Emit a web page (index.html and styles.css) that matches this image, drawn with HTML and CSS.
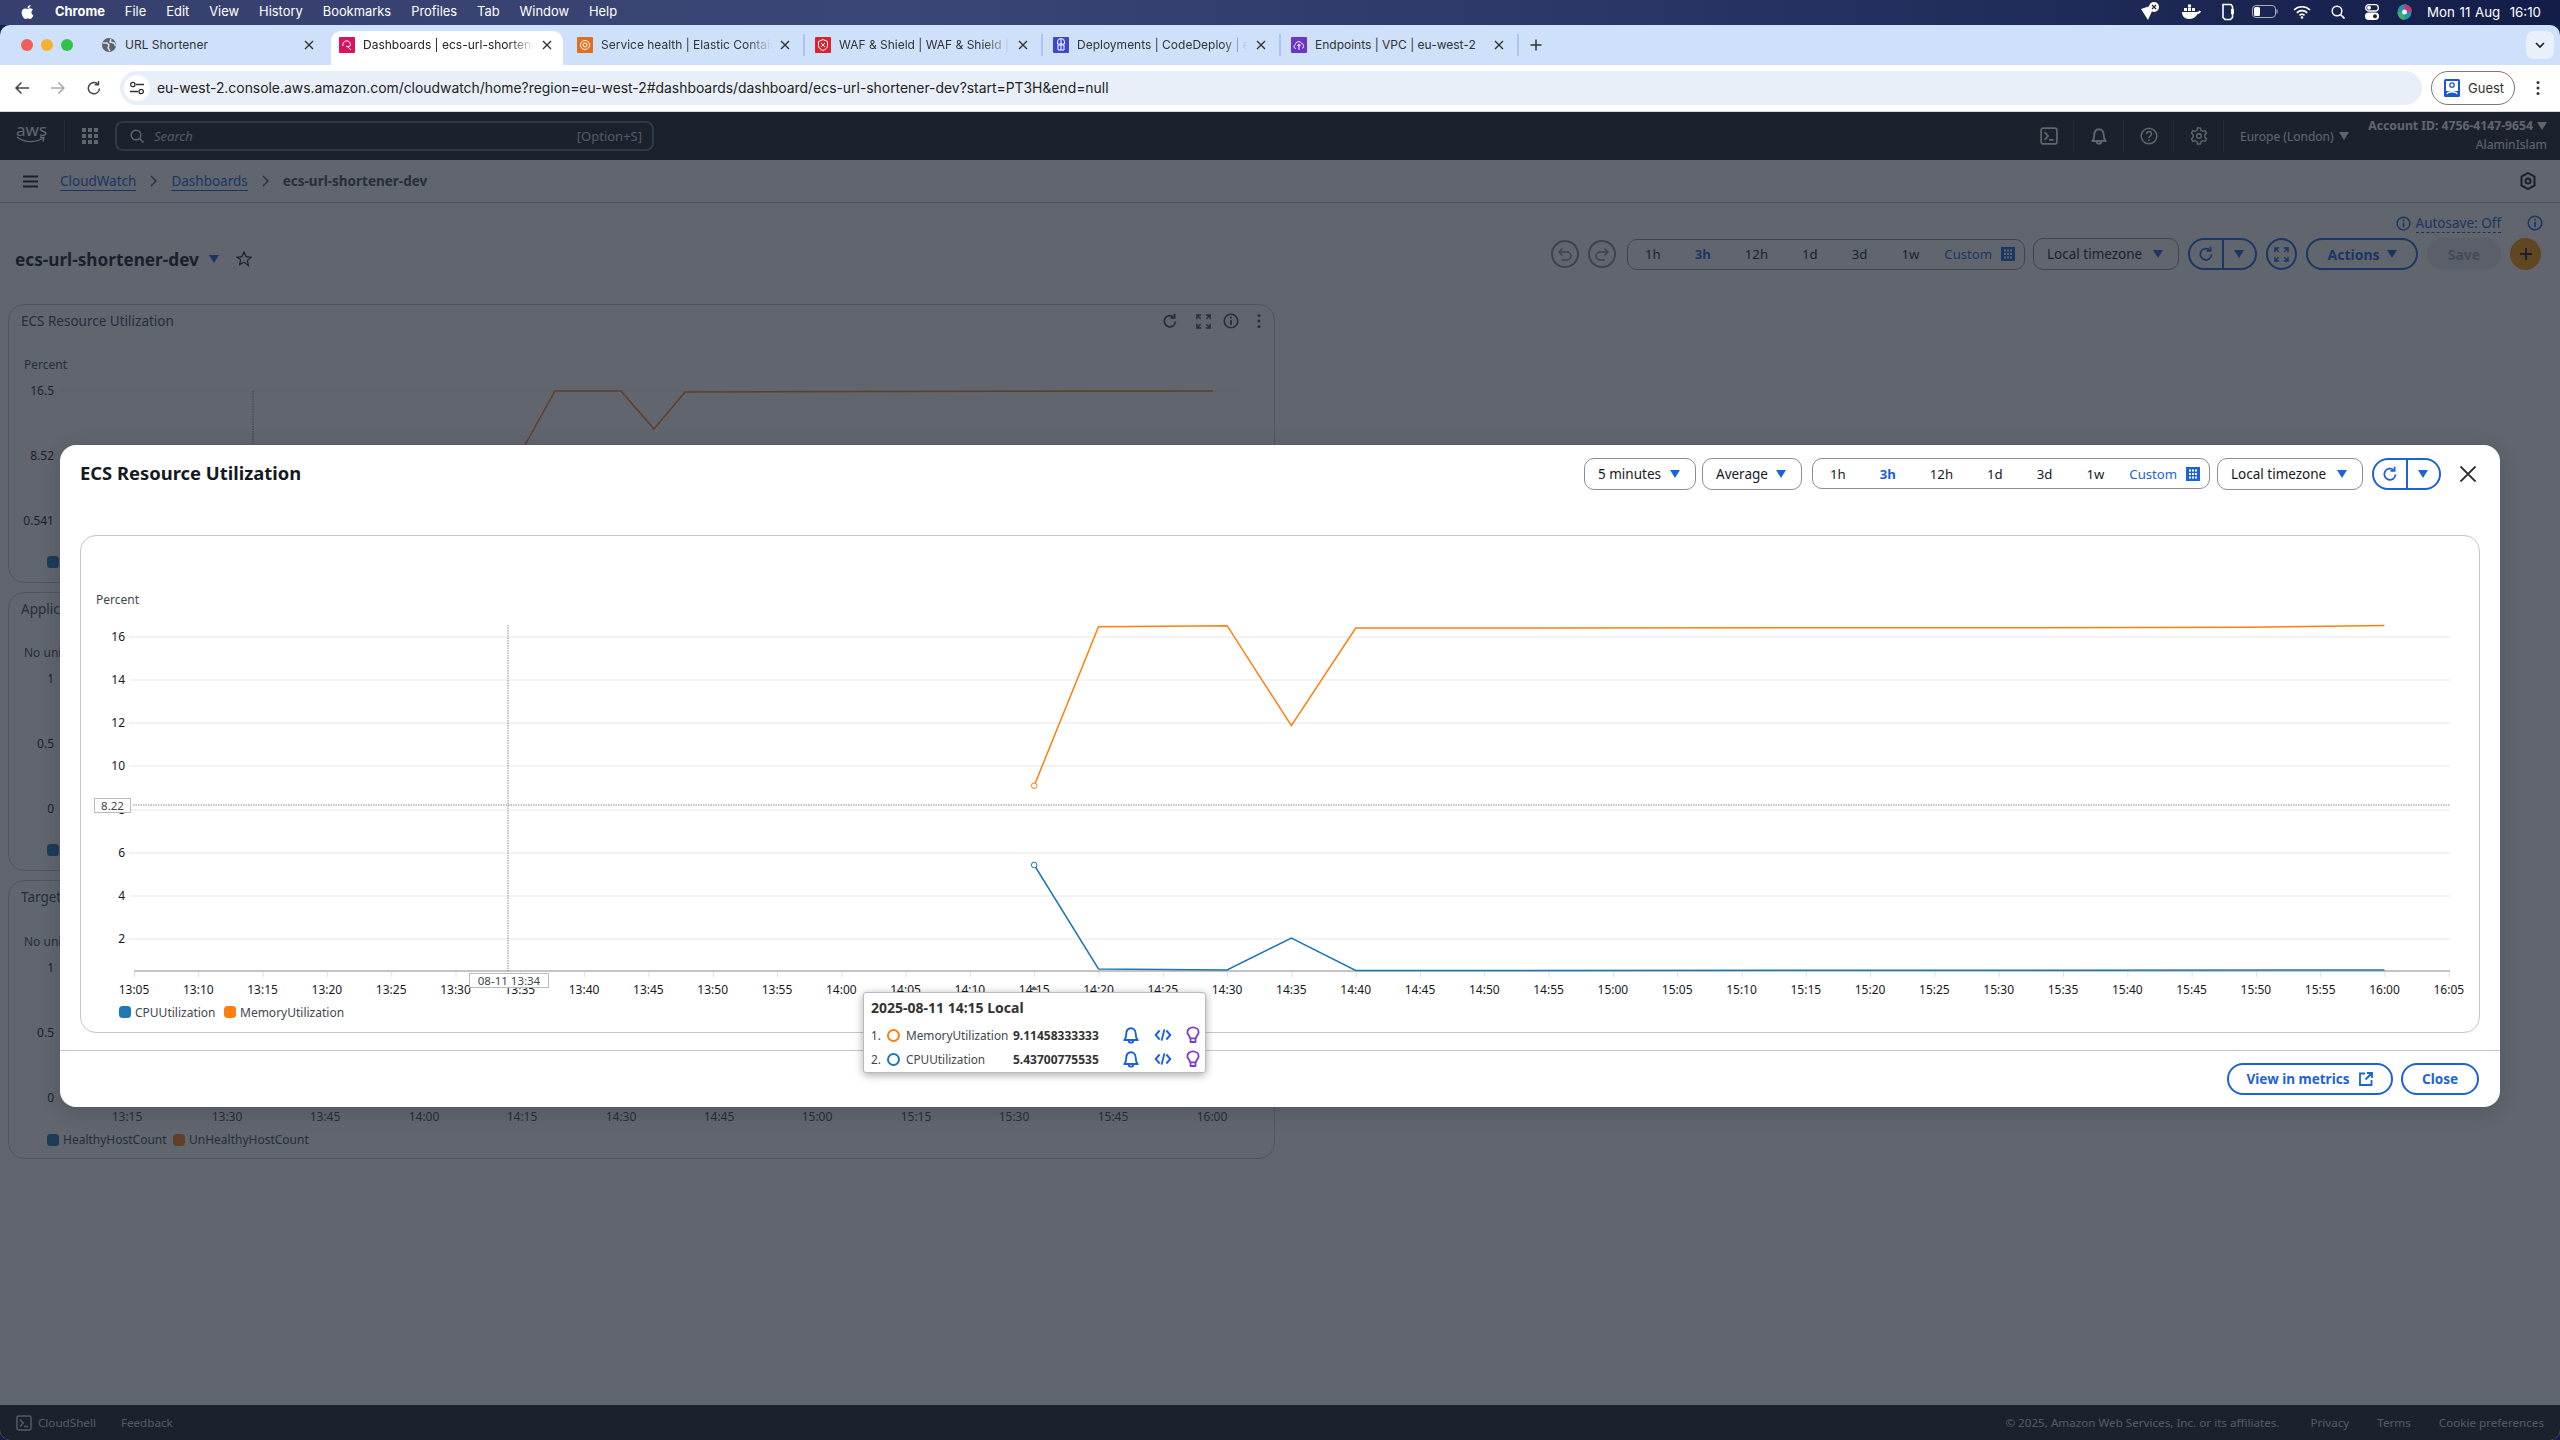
FILE: index.html
```html
<!DOCTYPE html>
<html lang="en">
<head>
  <meta charset="UTF-8" />
  <title>Dashboards | ecs-url-shortener-dev - CloudWatch</title>
  <link rel="stylesheet" href="styles.css">
</head>
<body>
  <svg class="sprite" xmlns="http://www.w3.org/2000/svg">
    <symbol id="i-close" viewBox="0 0 10 10"><path d="M1 1l8 8M9 1l-8 8" fill="none" stroke="currentColor" stroke-width="1.4"/></symbol>
    <symbol id="i-refresh" viewBox="0 0 16 16"><path d="M13.5 8.5a5.6 5.6 0 1 1-2-4.6" fill="none" stroke="currentColor" stroke-width="1.8"/><path d="M12.6 .8v4.1H8.5" fill="none" stroke="currentColor" stroke-width="1.8"/></symbol>
    <symbol id="i-cal" viewBox="0 0 14 14"><path d="M0 0h14v14H0z" fill="currentColor"/><path d="M3 2.5h2v2H3zM6 2.5h2v2H6zM9 2.5h2v2H9zM3 6h2v2H3zM6 6h2v2H6zM9 6h2v2H9zM3 9.500h2v2H3zM6 9.500h2v2H6zM9 9.500h2v2H9z" fill="#fff"/></symbol>
    <symbol id="i-bell" viewBox="0 0 16 16"><path d="M2 12.500c1.500-1.500 1.800-2.500 1.800-5.500C3.800 4 5.500 2 8 2s4.200 2 4.200 5c0 3 .3 4 1.800 5.500z M6 13c0 2.400 4 2.400 4 0" fill="none" stroke="currentColor" stroke-width="1.700" stroke-linejoin="round"/></symbol>
    <symbol id="i-code" viewBox="0 0 16 16"><path d="M5 4L1.500 8 5 12M11 4l3.500 4-3.500 4M9.300 3L6.700 13" fill="none" stroke="currentColor" stroke-width="1.700"/></symbol>
    <symbol id="i-bulb" viewBox="0 0 16 16"><path d="M5.500 11c0-2-2.500-3-2.500-5.500C3 3 5.200 1.300 8 1.300S13 3 13 5.500C13 8 10.500 9 10.500 11z M5.800 11v3.200h4.400V11" fill="none" stroke="currentColor" stroke-width="1.600" stroke-linejoin="round"/></symbol>
    <symbol id="i-expand" viewBox="0 0 16 16"><path d="M1 5.500V1h4.500M10.500 1H15v4.500M15 10.500V15h-4.500M5.500 15H1v-4.500M1 1l4 4M15 1l-4 4M15 15l-4-4M1 15l4-4" fill="none" stroke="currentColor" stroke-width="1.600"/></symbol>
    <symbol id="i-info" viewBox="0 0 16 16"><circle cx="8" cy="8" r="6.800" fill="none" stroke="currentColor" stroke-width="1.600"/><path d="M8 7v5M8 3.800v1.800" fill="none" stroke="currentColor" stroke-width="1.800"/></symbol>
    <symbol id="i-shell" viewBox="0 0 16 16"><rect x="1" y="1" width="14" height="14" rx="2" fill="none" stroke="currentColor" stroke-width="1.500"/><path d="M4 4.500L7.200 8 4 11.500M8 11.500h4" fill="none" stroke="currentColor" stroke-width="1.500"/></symbol>
  </svg>

  <div class="menubar">
    <svg class="apple" viewBox="0 0 384 512"><path d="M318.700 268.700c-.2-36.700 16.400-64.400 50-84.800-18.800-26.900-47.200-41.700-84.700-44.600-35.500-2.800-74.300 20.700-88.500 20.700-15 0-49.400-19.700-76.400-19.700C63.300 141.200 4 184.800 4 273.500q0 39.300 14.400 81.200c12.800 36.700 59 126.700 107.200 125.200 25.200-.6 43-17.900 75.800-17.900 31.800 0 48.300 17.900 76.400 17.900 48.600-.7 90.400-82.500 102.600-119.300-65.200-30.700-61.700-90-61.700-91.900zm-56.600-164.200c27.300-32.400 24.800-61.900 24-72.500-24.100 1.400-52 16.400-67.900 34.900-17.500 19.800-27.800 44.300-25.600 71.900 26.100 2 49.900-11.400 69.500-34.300z"/></svg>
    <b>Chrome</b><span>File</span><span>Edit</span><span>View</span><span>History</span><span>Bookmarks</span><span>Profiles</span><span>Tab</span><span>Window</span><span>Help</span>
    <div class="status-icons">
      <svg width="22" height="22" viewBox="0 0 22 22"><path d="M2 8l9-3 3 3-5 11z" fill="#fff"/><circle cx="15" cy="6" r="5" fill="#fff"/><path d="M13 4l4 4M17 4l-4 4" stroke="#222" stroke-width="1.200"/></svg>
      <svg width="20" height="16" viewBox="0 0 20 16"><path d="M1 8h15c1 0 2-1 2.500-1.500L20 7.500c-1 2-2.500 2.500-3.500 2.500C15 13 12 15 8 15 3.500 15 1 12 1 8z" fill="#fff"/><path d="M3 4h3v3H3zM7 4h3v3H7zM11 4h3v3h-3zM7 .5h3v3H7z" fill="#fff"/></svg>
      <svg width="14" height="18" viewBox="0 0 14 18"><path d="M2 1.500h8l1.500 2v11l-2 2H4l-2-2z" fill="none" stroke="#fff" stroke-width="1.600"/><path d="M10 6h3v5h-3z" fill="#fff"/></svg>
      <svg width="26" height="13" viewBox="0 0 26 13"><rect x=".5" y=".5" width="23" height="12" rx="3.500" fill="none" stroke="#aab" stroke-width="1"/><rect x="2" y="2" width="6" height="9" rx="1.500" fill="#fff"/><path d="M25 4.500v4" stroke="#aab" stroke-width="1.200"/></svg>
      <svg width="18" height="14" viewBox="0 0 18 14"><path d="M1 5a11.500 11.500 0 0 1 16 0M3.800 7.800a7.500 7.500 0 0 1 10.400 0M6.500 10.300a3.500 3.500 0 0 1 5 0" fill="none" stroke="#fff" stroke-width="1.700"/><circle cx="9" cy="12.500" r="1.300" fill="#fff"/></svg>
      <svg width="14" height="14" viewBox="0 0 14 14"><circle cx="6" cy="6" r="4.800" fill="none" stroke="#fff" stroke-width="1.500"/><path d="M9.500 9.500L13.500 13.500" stroke="#fff" stroke-width="1.700"/></svg>
      <svg width="14" height="16" viewBox="0 0 14 16"><rect x=".7" y=".7" width="12.600" height="6.300" rx="3" fill="none" stroke="#fff" stroke-width="1.300"/><circle cx="4" cy="3.800" r="2" fill="#fff"/><rect y="8.500" width="14" height="7.500" rx="3.700" fill="#fff"/><circle cx="10" cy="12.200" r="2" fill="#222"/></svg>
      <svg width="15" height="16" viewBox="0 0 15 16"><ellipse cx="7.500" cy="8" rx="7" ry="7.800" fill="#2a8fa8"/><path d="M7.500 .2C12 .2 15 4 15 8H7.500z" fill="#c0387a"/><path d="M.5 8c0 4 3 7.800 7 7.800V8z" fill="#3fae72"/><circle cx="7.500" cy="8" r="2.500" fill="#e7eefc"/></svg>
    </div>
    <span class="clock">Mon 11 Aug&nbsp; 16:10</span>
  </div>

  <div class="window">
    <div class="tabstrip">
      <div class="lights"><i class="red"></i><i class="amber"></i><i class="green"></i></div>
      <div class="tab">
        <svg class="favicon" viewBox="0 0 16 16"><circle cx="8" cy="8" r="7" fill="#5f6368"/><path d="M2 6h4l2 2-1 3 2 3M10 2L9 5l4 1 1.500 3" fill="none" stroke="#cfe0fa" stroke-width="1.500"/></svg>
        <span class="tab-title">URL Shortener</span>
        <svg class="tab-close"><use href="#i-close"/></svg>
      </div>
      <i class="tab-gap"></i>
      <div class="tab active">
        <svg class="favicon" viewBox="0 0 16 16"><rect width="16" height="16" rx="1" fill="#d6145f"/><path d="M4 9c-1-3 2-6 5-5 2 1 3 3 2 5-1 1-3 1-4 0M9 10l3 3" fill="none" stroke="#fff" stroke-width="1"/></svg>
        <span class="tab-title fade">Dashboards | ecs-url-shortener-dev - CloudWatch</span>
        <svg class="tab-close"><use href="#i-close"/></svg>
      </div>
      <i class="tab-gap"></i>
      <div class="tab">
        <svg class="favicon" viewBox="0 0 16 16"><rect width="16" height="16" rx="1" fill="#e0701e"/><circle cx="8" cy="8" r="4.500" fill="none" stroke="#fff" stroke-width="1"/><circle cx="8" cy="8" r="2" fill="none" stroke="#fff" stroke-width="1"/></svg>
        <span class="tab-title fade">Service health | Elastic Container Service</span>
        <svg class="tab-close"><use href="#i-close"/></svg>
      </div>
      <i class="tab-gap on"></i>
      <div class="tab">
        <svg class="favicon" viewBox="0 0 16 16"><rect width="16" height="16" rx="1" fill="#d9232e"/><path d="M8 2.500l4.500 2v4c0 2.500-2 4-4.500 5-2.500-1-4.500-2.500-4.500-5v-4zM6 6l4 4M10 6l-4 4" fill="none" stroke="#fff" stroke-width="1"/></svg>
        <span class="tab-title fade">WAF &amp; Shield | WAF &amp; Shield | Global</span>
        <svg class="tab-close"><use href="#i-close"/></svg>
      </div>
      <i class="tab-gap on"></i>
      <div class="tab">
        <svg class="favicon" viewBox="0 0 16 16"><rect width="16" height="16" rx="1" fill="#3b48cc"/><path d="M4.500 7V5a3.500 3.500 0 0 1 7 0v2zM5 8h6v5H5zM8 2v5M8 8v5" fill="none" stroke="#fff" stroke-width="1"/></svg>
        <span class="tab-title fade">Deployments | CodeDeploy | eu-west-2</span>
        <svg class="tab-close"><use href="#i-close"/></svg>
      </div>
      <i class="tab-gap on"></i>
      <div class="tab">
        <svg class="favicon" viewBox="0 0 16 16"><rect width="16" height="16" rx="1" fill="#6b35c9"/><path d="M5 11.500c-2.500 0-2.500-3.500-.5-4 0-3 5-4 6-1 2.500 0 3 4 .5 5M8 7v6M6.500 9L8 7l1.500 2" fill="none" stroke="#fff" stroke-width="1"/></svg>
        <span class="tab-title">Endpoints | VPC | eu-west-2</span>
        <svg class="tab-close"><use href="#i-close"/></svg>
      </div>
      <i class="tab-gap on"></i>
      <svg class="tab-new" viewBox="0 0 12 12"><path d="M6 .5v11M.5 6h11" stroke="#333" stroke-width="1.500"/></svg>
      <div class="tab-search"><svg width="10" height="7" viewBox="0 0 10 7"><path d="M1 1l4 4 4-4" fill="none" stroke="#222" stroke-width="1.600"/></svg></div>
    </div>

    <div class="toolbar">
      <svg class="nav" viewBox="0 0 16 16"><path d="M15 8H2M7.500 2.500L2 8l5.500 5.500" fill="none" stroke="#444" stroke-width="1.500"/></svg>
      <svg class="nav" viewBox="0 0 16 16"><path d="M1 8h13M8.500 2.500L14 8l-5.500 5.500" fill="none" stroke="#aaa" stroke-width="1.500"/></svg>
      <svg class="nav" viewBox="0 0 16 16"><path d="M13.500 8.500a5.600 5.600 0 1 1-2-4.600" fill="none" stroke="#444" stroke-width="1.500"/><path d="M12.500 1v3.800H8.700" fill="none" stroke="#444" stroke-width="1.500"/></svg>
      <div class="address">
        <span class="site-info"><svg width="14" height="14" viewBox="0 0 14 14"><path d="M6 3.500h8M0 10.500h8" stroke="#333" stroke-width="1.300"/><circle cx="2.800" cy="3.500" r="2.200" fill="none" stroke="#333" stroke-width="1.300"/><circle cx="11.200" cy="10.500" r="2.200" fill="none" stroke="#333" stroke-width="1.300"/></svg></span>
        <span class="url">eu-west-2.console.aws.amazon.com/cloudwatch/home?region=eu-west-2#dashboards/dashboard/ecs-url-shortener-dev?start=PT3H&amp;end=null</span>
      </div>
      <div class="guest">
        <svg width="16" height="18" viewBox="0 0 16 18"><rect width="16" height="18" rx="1.500" fill="#1a56d6"/><rect x="2" y="2" width="12" height="10" fill="#fff"/><circle cx="8" cy="6" r="2.200" fill="none" stroke="#1a56d6" stroke-width="1.300"/><path d="M3 15c1-3 9-3 10 0" fill="none" stroke="#fff" stroke-width="1.300"/></svg>
        Guest
      </div>
      <svg class="kebab" viewBox="0 0 4 16"><circle cx="2" cy="2.500" r="1.500"/><circle cx="2" cy="8" r="1.500"/><circle cx="2" cy="13.500" r="1.500"/></svg>
    </div>

    <div class="console">
      <header class="aws-nav">
        <div class="aws-logo">aws<svg width="30" height="8" viewBox="0 0 30 8"><path d="M1 1c8 6 18 6 26 1M24 1l4 .5-1 4" fill="none" stroke="#fff" stroke-width="1.400"/></svg></div>
        <div class="apps"><i></i><i></i><i></i><i></i><i></i><i></i><i></i><i></i><i></i></div>
        <div class="search">
          <svg width="14" height="14" viewBox="0 0 14 14"><circle cx="6" cy="6" r="4.800" fill="none" stroke="#fff" stroke-width="1.400"/><path d="M9.500 9.500L13.500 13.500" stroke="#fff" stroke-width="1.500"/></svg>
          <em>Search</em>
          <span>[Option+S]</span>
        </div>
        <div class="nav-slot first"><svg width="18" height="18"><use href="#i-shell"/></svg></div>
        <div class="nav-slot"><svg width="18" height="18"><use href="#i-bell"/></svg></div>
        <div class="nav-slot"><svg width="18" height="18" viewBox="0 0 18 18"><circle cx="9" cy="9" r="7.800" fill="none" stroke="currentColor" stroke-width="1.500"/><path d="M6.500 7c0-3.500 5-3.500 5 0 0 2-2.500 2-2.500 4M9 12.500v1.500" fill="none" stroke="currentColor" stroke-width="1.500"/></svg></div>
        <div class="nav-slot"><svg width="18" height="18" viewBox="0 0 18 18"><path d="M7.500 1h3l.5 2.300 1.800 1 2.200-.8 1.500 2.600-1.700 1.600v2.600l1.700 1.600-1.500 2.600-2.200-.8-1.800 1-.5 2.300h-3L7 14.700l-1.800-1-2.200.8-1.500-2.600 1.700-1.600V7.700L1.500 6.100 3 3.500l2.200.8 1.800-1z" fill="none" stroke="currentColor" stroke-width="1.400"/><circle cx="9" cy="9" r="2.300" fill="none" stroke="currentColor" stroke-width="1.400"/></svg></div>
        <div class="region">Europe (London) <i class="caret"></i></div>
        <div class="account">
          <b>Account ID: 4756-4147-9654 <i class="caret"></i></b>
          <span>AlaminIslam</span>
        </div>
      </header>

      <nav class="crumbs">
        <svg class="burger" viewBox="0 0 15 13"><path d="M0 1.500h15M0 6.500h15M0 11.500h15" stroke="#16191f" stroke-width="2"/></svg>
        <a>CloudWatch</a>
        <svg class="crumb-sep" viewBox="0 0 7 12"><path d="M1 1l5 5-5 5" fill="none" stroke="#414750" stroke-width="1.300"/></svg>
        <a>Dashboards</a>
        <svg class="crumb-sep" viewBox="0 0 7 12"><path d="M1 1l5 5-5 5" fill="none" stroke="#414750" stroke-width="1.300"/></svg>
        <b>ecs-url-shortener-dev</b>
        <svg class="hex" viewBox="0 0 16 18"><path d="M8 1l6.500 3.700v8.600L8 17l-6.500-3.700V4.700z" fill="none" stroke="#16191f" stroke-width="2"/><circle cx="8" cy="9" r="2.500" fill="none" stroke="#16191f" stroke-width="2"/></svg>
      </nav>

      <main class="page">
        <div class="autosave-row">
          <span class="autosave"><svg width="15" height="15"><use href="#i-info"/></svg><u>Autosave: Off</u></span>
          <svg class="page-info" width="16" height="16"><use href="#i-info"/></svg>
        </div>

        <div class="page-head">
          <div class="page-title">
            <h1>ecs-url-shortener-dev</h1>
            <i class="caret blue"></i>
            <svg class="star" viewBox="0 0 16 16"><path d="M8 1l2.100 4.600 5 .6-3.700 3.400 1 5L8 11.100l-4.400 2.500 1-5L.9 6.200l5-.6z" fill="none" stroke="#16191f" stroke-width="1.200"/></svg>
          </div>
          <div class="page-actions">
            <span class="round ghost"><svg width="16" height="16" viewBox="0 0 16 16"><path d="M2 6h8a3.500 3.500 0 0 1 0 8H5M5.500 2.500L2 6l3.500 3.500" fill="none" stroke="currentColor" stroke-width="1.500"/></svg></span>
            <span class="round ghost last"><svg width="16" height="16" viewBox="0 0 16 16"><path d="M14 6H6a3.500 3.500 0 0 0 0 8h5M10.500 2.500L14 6l-3.500 3.500" fill="none" stroke="currentColor" stroke-width="1.500"/></svg></span>
            <div class="range">
              <span>1h</span><b>3h</b><span>12h</span><span>1d</span><span>3d</span><span>1w</span>
              <em>Custom</em><svg width="14" height="14"><use href="#i-cal"/></svg>
            </div>
            <div class="select tz">Local timezone <i class="caret blue"></i></div>
            <div class="split">
              <span><svg width="16" height="16"><use href="#i-refresh"/></svg></span>
              <span><i class="caret blue"></i></span>
            </div>
            <span class="round outline"><svg width="15" height="15"><use href="#i-expand"/></svg></span>
            <span class="pill actions">Actions <i class="caret blue"></i></span>
            <span class="pill save">Save</span>
            <span class="round add"><svg width="14" height="14" viewBox="0 0 14 14"><path d="M7 1v12M1 7h12" stroke="#16191f" stroke-width="2"/></svg></span>
          </div>
        </div>

        <section class="widget">
          <div class="widget-head">ECS Resource Utilization
            <div class="widget-tools">
              <svg class="tool-refresh" width="16" height="16"><use href="#i-refresh"/></svg>
              <svg width="15" height="15"><use href="#i-expand"/></svg>
              <svg width="16" height="16"><use href="#i-info"/></svg>
              <svg class="tool-dots" width="4" height="16" viewBox="0 0 4 16"><circle cx="2" cy="2.500" r="1.500" fill="currentColor"/><circle cx="2" cy="8" r="1.500" fill="currentColor"/><circle cx="2" cy="13.500" r="1.500" fill="currentColor"/></svg>
            </div>
          </div>
          <svg class="widget-chart" viewBox="9 339 1265 243">
            <text x="24" y="369" class="unit">Percent</text>
            <text x="54" y="395" class="val">16.5</text>
            <text x="54" y="460" class="val">8.52</text>
            <text x="54" y="525" class="val">0.541</text>
            <path d="M60 391H1240M60 456H1240M60 521H1240" class="grid"/>
            <path d="M253 391V560" class="cross"/>
            <polyline points="497,521 525,445 555,391 621,391 654,429 685,392 1213,391" class="line-mem"/>
            <rect x="47" y="556" width="12" height="12" rx="3.500" class="sw-cpu"/>
          </svg>
        </section>

        <section class="widget">
          <div class="widget-head">Application Load Balancer</div>
          <svg class="widget-chart" viewBox="9 627 1265 243">
            <text x="24" y="657" class="unit">No unit</text>
            <text x="54" y="683" class="val">1</text>
            <text x="54" y="748" class="val">0.5</text>
            <text x="54" y="813" class="val">0</text>
            <rect x="47" y="844" width="12" height="12" rx="3.500" class="sw-cpu"/>
          </svg>
        </section>

        <section class="widget">
          <div class="widget-head">Target Group Health</div>
          <svg class="widget-chart" viewBox="9 914 1265 243">
            <text x="24" y="945" class="unit">No unit</text>
            <text x="54" y="971" class="val">1</text>
            <text x="54" y="1036" class="val">0.5</text>
            <text x="54" y="1101" class="val">0</text>
            <g class="x-labels">
              <text x="127" y="1120">13:15</text><text x="227" y="1120">13:30</text><text x="325" y="1120">13:45</text><text x="424" y="1120">14:00</text>
              <text x="522" y="1120">14:15</text><text x="621" y="1120">14:30</text><text x="719" y="1120">14:45</text><text x="817" y="1120">15:00</text>
              <text x="916" y="1120">15:15</text><text x="1014" y="1120">15:30</text><text x="1113" y="1120">15:45</text><text x="1212" y="1120">16:00</text>
            </g>
            <rect x="47" y="1133" width="12" height="12" rx="3.500" class="sw-cpu"/>
            <text x="63" y="1143" class="legend">HealthyHostCount</text>
            <rect x="173" y="1133" width="12" height="12" rx="3.500" class="sw-mem"/>
            <text x="189" y="1143" class="legend">UnHealthyHostCount</text>
          </svg>
        </section>
      </main>

      <footer class="console-foot">
        <svg width="16" height="16"><use href="#i-shell"/></svg>
        <span class="foot-shell">CloudShell</span>
        <span>Feedback</span>
        <span class="foot-copy">© 2025, Amazon Web Services, Inc. or its affiliates.</span>
        <span>Privacy</span>
        <span>Terms</span>
        <span>Cookie preferences</span>
      </footer>

      <div class="overlay">
        <div class="modal">
          <div class="modal-head">
            <h2>ECS Resource Utilization</h2>
            <div class="select period">5 minutes <i class="caret link"></i></div>
            <div class="select stat">Average <i class="caret link"></i></div>
            <div class="range">
              <span>1h</span><b>3h</b><span>12h</span><span>1d</span><span>3d</span><span>1w</span>
              <em>Custom</em><svg width="14" height="14"><use href="#i-cal"/></svg>
            </div>
            <div class="select tz">Local timezone <i class="caret link"></i></div>
            <div class="split">
              <span><svg width="16" height="16"><use href="#i-refresh"/></svg></span>
              <span><i class="caret link"></i></span>
            </div>
            <svg class="modal-x" viewBox="0 0 18 18"><path d="M1.500 1.500l15 15M16.500 1.500l-15 15" stroke="#333" stroke-width="1.800"/></svg>
          </div>

          <div class="chart-box">
            <svg class="chart" viewBox="81 536 2398 496">
              <text x="96" y="604" class="unit">Percent</text>

              <path d="M129 637H2450M129 680H2450M129 723H2450M129 766H2450M129 810H2450M129 853H2450M129 896H2450M129 939H2450" class="grid"/>
              <g class="y-labels">
                <text x="125" y="641">16</text><text x="125" y="684">14</text><text x="125" y="727">12</text><text x="125" y="770">10</text>
                <text x="125" y="814">8</text><text x="125" y="857">6</text><text x="125" y="900">4</text><text x="125" y="943">2</text>
              </g>

              <line x1="134" x2="2450" y1="974" y2="974" class="ticks"/>
              <line x1="134" x2="2450" y1="971" y2="971" class="axis"/>
              <g class="x-labels dark">
                <text x="134" y="994">13:05</text><text x="198.300" y="994">13:10</text><text x="262.600" y="994">13:15</text><text x="326.900" y="994">13:20</text>
                <text x="391.200" y="994">13:25</text><text x="455.500" y="994">13:30</text><text x="519.800" y="994">13:35</text><text x="584.100" y="994">13:40</text>
                <text x="648.400" y="994">13:45</text><text x="712.700" y="994">13:50</text><text x="777" y="994">13:55</text><text x="841.300" y="994">14:00</text>
                <text x="905.600" y="994">14:05</text><text x="969.900" y="994">14:10</text><text x="1034.200" y="994">14:15</text><text x="1098.500" y="994">14:20</text>
                <text x="1162.800" y="994">14:25</text><text x="1227.100" y="994">14:30</text><text x="1291.400" y="994">14:35</text><text x="1355.700" y="994">14:40</text>
                <text x="1420" y="994">14:45</text><text x="1484.300" y="994">14:50</text><text x="1548.600" y="994">14:55</text><text x="1612.900" y="994">15:00</text>
                <text x="1677.200" y="994">15:05</text><text x="1741.500" y="994">15:10</text><text x="1805.800" y="994">15:15</text><text x="1870.100" y="994">15:20</text>
                <text x="1934.400" y="994">15:25</text><text x="1998.700" y="994">15:30</text><text x="2063" y="994">15:35</text><text x="2127.300" y="994">15:40</text>
                <text x="2191.600" y="994">15:45</text><text x="2255.900" y="994">15:50</text><text x="2320.200" y="994">15:55</text><text x="2384.500" y="994">16:00</text>
                <text x="2448.800" y="994">16:05</text>
              </g>

              <path d="M133 805H2450M508 625V971" class="cross"/>

              <polyline points="1034.200,785.700 1098.500,626.700 1227.100,625.700 1291.400,725.700 1355.700,628 2000,627.800 2250,627.300 2384.500,625.600" class="line-mem"/>
              <polyline points="1034.200,865 1098.500,969 1227.100,970 1291.400,938 1355.700,970.500 2384.500,970" class="line-cpu"/>
              <circle cx="1034.200" cy="785.700" r="2.800" class="dot-mem"/>
              <circle cx="1034.200" cy="865" r="2.800" class="dot-cpu"/>
              <path d="M1030 990l4-4 4 4z" fill="#666"/>

              <rect x="94.500" y="798.500" width="36" height="14" class="axis-tag"/>
              <text x="112.500" y="809.500" class="tag-text">8.22</text>
              <rect x="469.500" y="973.500" width="79" height="14" class="axis-tag"/>
              <text x="509" y="984.500" class="tag-text">08-11 13:34</text>

              <rect x="119" y="1006" width="12" height="12" rx="3.500" class="sw-cpu"/>
              <text x="135" y="1017" class="legend">CPUUtilization</text>
              <rect x="224" y="1006" width="12" height="12" rx="3.500" class="sw-mem"/>
              <text x="240" y="1017" class="legend">MemoryUtilization</text>
            </svg>
          </div>

          <div class="modal-foot">
            <span class="pill strong metrics">View in metrics
              <svg width="14" height="14" viewBox="0 0 14 14"><path d="M6 1.500H1v11.500h11.500V8M8 1h5v5M13 1L6.500 7.500" fill="none" stroke="currentColor" stroke-width="1.800"/></svg>
            </span>
            <span class="pill strong close">Close</span>
          </div>

          <div class="hover-card">
            <div class="hover-title">2025-08-11 14:15 Local</div>
            <div class="hover-row">
              <span>1.</span><i class="ring mem"></i><span>MemoryUtilization</span><b>9.11458333333</b>
              <svg class="ic-blue"><use href="#i-bell"/></svg><svg class="ic-blue"><use href="#i-code"/></svg><svg class="ic-purple"><use href="#i-bulb"/></svg>
            </div>
            <div class="hover-row">
              <span>2.</span><i class="ring cpu"></i><span>CPUUtilization</span><b>5.43700775535</b>
              <svg class="ic-blue"><use href="#i-bell"/></svg><svg class="ic-blue"><use href="#i-code"/></svg><svg class="ic-purple"><use href="#i-bulb"/></svg>
            </div>
          </div>
        </div>
      </div>
    </div>
  </div>
</body>
</html>
```

FILE: styles.css
```css
* { box-sizing: border-box; }

html, body {
  margin: 0;
  height: 100%;
}

body {
  width: 2560px;
  height: 1440px;
  overflow: hidden;
  display: flex;
  flex-direction: column;
  background: #14204a;
  font-family: "Noto Sans", sans-serif;
  color: #16191f;
}

.sprite { display: none; }

/* mac menu bar */
.menubar {
  height: 25px;
  flex: none;
  display: flex;
  align-items: center;
  gap: 20px;
  padding: 0 19px 2px 21px;
  background: linear-gradient(90deg, #363f6e, #3a4675 35%, #2a3767 62%, #131d48);
  color: #fff;
  font-family: Inter, sans-serif;
  font-size: 12.900px;
}

.menubar b { margin-left: -2px; }

.apple {
  width: 13px;
  height: 16px;
  fill: #fff;
  margin-right: 3px;
}

.status-icons {
  margin-left: auto;
  display: grid;
  grid-template-columns: 42px 39px 35.500px 37.500px 38px 34px 32.500px 33px;
  justify-items: center;
  align-items: center;
  margin-right: -14px;
}

.clock {
  white-space: nowrap;
  font-size: 13.300px;
  word-spacing: 1px;
}

/* browser window */
.window {
  flex: 1;
  min-height: 0;
  display: flex;
  flex-direction: column;
  border-radius: 10px;
  overflow: hidden;
}

.tabstrip {
  height: 40px;
  flex: none;
  display: flex;
  align-items: flex-end;
  background: #cfe0fa;
  font-family: Inter, sans-serif;
  font-size: 12px;
  color: #333;
}

.lights {
  width: 93px;
  height: 40px;
  padding-left: 21px;
  display: flex;
  align-items: center;
  gap: 8px;
}

.lights i {
  width: 12px;
  height: 12px;
  border-radius: 50%;
}

.lights .red { background: #ee5f57; }
.lights .amber { background: #f4b02f; }
.lights .green { background: #2fc348; }

.tab {
  width: 232px;
  height: 34px;
  display: flex;
  align-items: center;
  gap: 8px;
  padding: 0 11px 7px 8px;
}

.tab.active {
  background: #fff;
  border-radius: 10px 10px 0 0;
  color: #222;
}

.favicon {
  width: 16px;
  height: 16px;
  flex: none;
}

.tab-title {
  flex: 1;
  min-width: 0;
  white-space: nowrap;
  overflow: hidden;
}

.tab-title.fade {
  -webkit-mask-image: linear-gradient(90deg, #000 85%, transparent);
  mask-image: linear-gradient(90deg, #000 85%, transparent);
}

.tab-close {
  width: 10px;
  height: 10px;
  flex: none;
  color: #333;
}

.tab-gap {
  width: 2px;
  height: 22px;
  margin: 0 2px 9px;
}

.tab-gap.on { background: #a9c5f2; }

.tab-new {
  width: 12px;
  height: 12px;
  margin: 0 0 14px 9px;
}

.tab-search {
  margin-left: auto;
  margin-right: 6px;
  margin-bottom: 6px;
  width: 28px;
  height: 28px;
  border-radius: 8px;
  background: #e8f0fb;
  display: flex;
  align-items: center;
  justify-content: center;
}

.toolbar {
  height: 47px;
  flex: none;
  display: flex;
  align-items: center;
  padding: 0 0 1px 14px;
  background: #fff;
  border-bottom: 1px solid #d8d8d8;
  font-family: Inter, sans-serif;
}

.nav {
  width: 16px;
  height: 16px;
  margin-right: 20px;
}

.address {
  width: 2302px;
  height: 34px;
  margin-left: -2px;
  flex: none;
  display: flex;
  align-items: center;
  padding-left: 4px;
  border-radius: 17px;
  background: #e8eff9;
  font-size: 13.900px;
  color: #222;
}

.site-info {
  width: 26px;
  height: 26px;
  border-radius: 50%;
  background: #fff;
  display: flex;
  align-items: center;
  justify-content: center;
  margin-right: 7px;
}

.guest {
  width: 84px;
  height: 34px;
  margin-left: 9px;
  display: flex;
  align-items: center;
  gap: 8px;
  padding-left: 12px;
  border: 1px solid #777;
  border-radius: 17px;
  font-size: 13px;
  color: #333;
}

.kebab {
  width: 4px;
  height: 16px;
  margin-left: 21px;
  fill: #333;
}

/* aws console */
.console {
  flex: 1;
  min-height: 0;
  position: relative;
  display: flex;
  flex-direction: column;
  background: #fff;
}

.aws-nav {
  height: 48px;
  flex: none;
  display: flex;
  align-items: center;
  background: #162026;
  color: #fff;
  font-size: 12px;
}

.aws-logo {
  width: 49px;
  margin-left: 16px;
  height: 32px;
  font-size: 17px;
  line-height: 20px;
  text-align: left;
  border-right: 1px solid #414750;
}

.aws-logo svg {
  display: block;
  margin-top: -4px;
}

.apps {
  margin-left: 17px;
  display: grid;
  grid-template-columns: repeat(3, 4px);
  gap: 2px;
}

.apps i {
  width: 4px;
  height: 4px;
  background: #fff;
}

.search {
  width: 539px;
  height: 30px;
  margin-left: 17px;
  display: flex;
  align-items: center;
  padding: 0 10px 0 13px;
  border: 2px solid #5f6b7a;
  border-radius: 8px;
  font-size: 13px;
  color: #d1d5db;
}

.search em { margin-left: 10px; }
.search span { margin-left: auto; }

.nav-slot {
  width: 50px;
  height: 32px;
  display: flex;
  align-items: center;
  justify-content: center;
  border-right: 1px solid #414750;
}

.nav-slot.first { margin-left: 1370px; }

.region {
  margin-left: 16px;
  display: flex;
  align-items: center;
  gap: 5px;
}

.account {
  margin-left: auto;
  padding: 0 13px 2px 0;
  display: flex;
  flex-direction: column;
  align-items: flex-end;
  gap: 2px;
  line-height: 17px;
  font-size: 12.200px;
}

.account b {
  display: flex;
  align-items: center;
  gap: 4px;
}

.caret {
  display: inline-block;
  width: 0;
  height: 0;
  border-left: 5px solid transparent;
  border-right: 5px solid transparent;
  border-top: 8px solid currentColor;
}

.caret.blue, .caret.link { color: #1c62d9; }

.crumbs {
  height: 43px;
  flex: none;
  display: flex;
  align-items: center;
  padding: 0 24px 0 23px;
  border-bottom: 1px solid #c6c6cd;
  background: #fff;
  font-size: 13.500px;
}

.burger {
  width: 15px;
  height: 13px;
  margin-right: 22px;
}

.crumbs a {
  color: #1c62d9;
  border-bottom: 1px solid #1c62d9;
  line-height: 18px;
}

.crumb-sep {
  width: 7px;
  height: 12px;
  margin: 0 14px 0 14px;
}

.crumbs b { color: #414750; }

.hex {
  width: 16px;
  height: 18px;
  margin-left: auto;
}

.page {
  flex: 1;
  min-height: 0;
  padding: 0 8px;
}

.autosave-row {
  height: 20px;
  margin-top: 10px;
  display: flex;
  align-items: center;
  justify-content: flex-end;
  color: #1c62d9;
  font-size: 13.500px;
  padding-right: 9px;
}

.autosave {
  display: flex;
  align-items: center;
  gap: 5px;
  margin-right: 26px;
}

.autosave u {
  text-decoration: none;
  border-bottom: 1px dashed #1c62d9;
  line-height: 18px;
}

.page-head {
  height: 32px;
  margin-top: 5px;
  display: flex;
  align-items: center;
}

.page-title {
  display: flex;
  align-items: center;
  padding-top: 10px;
}

.page-title h1 {
  margin: 0 0 0 7px;
  font-size: 17.200px;
  font-weight: 700;
}

.page-title .caret { margin-left: 10px; }

.star {
  width: 16px;
  height: 16px;
  margin-left: 17px;
}

.page-actions {
  margin-left: auto;
  margin-right: 11px;
  display: flex;
  align-items: center;
  gap: 9px;
}

.page-actions .tz { margin-left: -1px; }

.range {
  width: 398px;
  height: 31px;
  flex: none;
  display: flex;
  align-items: center;
  gap: 34px;
  padding-left: 17px;
  border: 1px solid #8c8c94;
  border-radius: 10px;
  background: #fff;
  font-size: 13.200px;
  white-space: nowrap;
}

.range b { color: #1c62d9; }

.range em {
  margin-left: -9px;
  font-style: normal;
  color: #1c62d9;
}

.range svg {
  margin-left: -25px;
  color: #1c62d9;
}

.select {
  height: 32px;
  flex: none;
  display: flex;
  align-items: center;
  justify-content: space-between;
  padding: 0 15px 0 13px;
  border: 1px solid #8c8c94;
  border-radius: 10px;
  background: #fff;
  font-size: 13.500px;
  white-space: nowrap;
}

.select.tz { width: 146px; }
.select.period { width: 112px; }
.select.stat { width: 100px; }

.split {
  width: 69px;
  height: 32px;
  flex: none;
  display: flex;
  border: 2px solid #1c62d9;
  border-radius: 16px;
  color: #1c62d9;
}

.split span {
  flex: 1;
  display: flex;
  align-items: center;
  justify-content: center;
}

.split span + span { border-left: 2px solid #1c62d9; }

.round {
  width: 31px;
  height: 32px;
  border-radius: 50%;
  display: flex;
  align-items: center;
  justify-content: center;
  flex: none;
}

.round.ghost {
  width: 28px;
  height: 28px;
  border: 2px solid #8c8c94;
  color: #8c8c94;
}

.round.ghost.last { margin-right: 2px; }

.round.outline {
  border: 2px solid #1c62d9;
  color: #1c62d9;
}

.round.add { background: #ff9900; }

.pill {
  height: 32px;
  display: flex;
  align-items: center;
  justify-content: center;
  border: 2px solid #1c62d9;
  border-radius: 16px;
  color: #1c62d9;
  font-size: 14px;
  font-weight: 700;
  flex: none;
}

.pill.actions {
  width: 112px;
  gap: 7px;
}

.pill.save {
  width: 74px;
  border-color: transparent;
  background: #e9ebed;
  color: #9ba7b6;
}

.widget {
  width: 1267px;
  height: 279px;
  margin-top: 9px;
  border: 1px solid #c6c6cd;
  border-radius: 16px;
  overflow: hidden;
  background: #fff;
}

.page-head + .widget { margin-top: 34px; }

.widget-head {
  height: 34px;
  display: flex;
  align-items: center;
  padding: 0 0 2px 12px;
  font-size: 13.500px;
  color: #414750;
}

.widget-tools {
  margin-left: auto;
  margin-right: 13px;
  display: flex;
  align-items: center;
  gap: 12px;
  color: #414750;
}

.tool-refresh { margin-right: 6px; }
.tool-dots { margin-left: 6px; }

.widget-chart {
  display: block;
  width: 1265px;
  height: 243px;
}

.console-foot {
  height: 35px;
  flex: none;
  display: flex;
  align-items: center;
  gap: 28px;
  padding: 0 16px;
  background: #162026;
  color: #d5dbdb;
  font-size: 11.650px;
}

.foot-shell {
  margin-left: -22px;
  margin-right: -3px;
}

.foot-copy {
  margin-left: auto;
  margin-right: 3px;
}

.console-foot svg { flex: none; }

/* chart bits */
.unit, .legend { font-size: 12px; fill: #414750; }

.val { font-size: 12px; fill: #16191f; text-anchor: end; }

.y-labels text {
  font-size: 12px;
  fill: #16191f;
  text-anchor: end;
}

.x-labels text {
  font-size: 12px;
  fill: #414750;
  text-anchor: middle;
}

.x-labels.dark text { fill: #16191f; }

.grid {
  fill: none;
  stroke: #f0f0f0;
  stroke-width: 1.500;
}

.axis {
  stroke: #c4c4c4;
  stroke-width: 2;
}

.ticks {
  stroke: #e0e0e0;
  stroke-width: 6;
  stroke-dasharray: 1 63.300;
}

.cross {
  fill: none;
  stroke: #8a8a8a;
  stroke-width: 1;
  stroke-dasharray: 1.500 1;
}

.line-mem, .line-cpu {
  fill: none;
  stroke-width: 1.500;
}

.line-mem { stroke: #ff7f0e; }
.line-cpu { stroke: #1f77b4; }

.dot-mem, .dot-cpu {
  fill: #fff;
  stroke-width: 1;
}

.dot-mem { stroke: #ff7f0e; }
.dot-cpu { stroke: #1f77b4; }

.sw-cpu { fill: #1f77b4; }
.sw-mem { fill: #ff7f0e; }

.axis-tag {
  fill: #fff;
  stroke: #bbb;
  stroke-width: 1;
}

.tag-text {
  font-size: 11.500px;
  fill: #414750;
  text-anchor: middle;
}

/* dimmed layer and the modal on top */
.overlay {
  position: absolute;
  inset: 0;
  display: flex;
  align-items: center;
  justify-content: center;
  background: rgba(29, 35, 48, 0.7);
}

.modal {
  position: relative;
  width: 2440px;
  height: 662px;
  display: flex;
  flex-direction: column;
  border-radius: 16px;
  background: #fff;
  box-shadow: 0 4px 20px rgba(0, 0, 0, 0.15);
}

.modal-head {
  height: 90px;
  flex: none;
  display: flex;
  align-items: flex-start;
  padding: 13px 23px 0 20px;
}

.modal-head h2 {
  margin: 0 auto 0 0;
  font-size: 18.400px;
  line-height: 30px;
  font-weight: 700;
}

.modal-head .stat { margin-left: 6px; }
.modal-head .range { margin-left: 10px; }
.modal-head .tz { margin-left: 7px; }
.modal-head .split { margin-left: 9px; }

.modal-x {
  width: 18px;
  height: 18px;
  margin: 7px 0 0 18px;
}

.chart-box {
  height: 498px;
  margin: 0 20px;
  flex: none;
  border: 1px solid #c6c6cd;
  border-radius: 16px;
}

.chart {
  display: block;
  width: 2398px;
  height: 496px;
}

.modal-foot {
  margin-top: 17px;
  padding: 12px 21px 0 0;
  border-top: 1px solid #c6c6cd;
  display: flex;
  justify-content: flex-end;
  gap: 8px;
}

.pill.strong {
  gap: 10px;
  font-size: 13.500px;
}

.pill.metrics { width: 166px; }
.pill.close { width: 78px; }

.hover-card {
  position: absolute;
  left: 803px;
  top: 547px;
  width: 343px;
  height: 81px;
  padding: 5px 7px 0 7px;
  background: #fff;
  border: 1px solid #bbb;
  border-radius: 3px;
  box-shadow: 0 2px 8px rgba(0, 0, 0, 0.35);
  color: #414750;
}

.hover-title {
  font-size: 14px;
  font-weight: 700;
  line-height: 20px;
  color: #333;
  margin-bottom: 5px;
}

.hover-row {
  height: 24px;
  display: grid;
  grid-template-columns: 16px 19px 107px 109px 32px 30px 20px;
  align-items: center;
  font-size: 11.800px;
}

.hover-row b { color: #333; font-size: 12px; }

.hover-row svg {
  width: 18px;
  height: 18px;
}

.ic-blue { color: #1c62d9; }
.ic-purple { color: #7d3fc8; }

.ring {
  width: 13px;
  height: 13px;
  border-radius: 50%;
  border: 2.500px solid;
}

.ring.mem { border-color: #ff7f0e; }
.ring.cpu { border-color: #1f77b4; }
```
